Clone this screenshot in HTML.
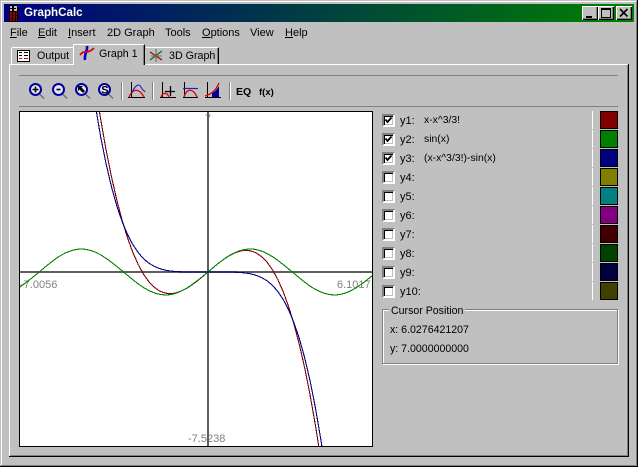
<!DOCTYPE html>
<html>
<head>
<meta charset="utf-8">
<style>
html,body{margin:0;padding:0;background:#c0c0c0;width:638px;height:467px;overflow:hidden;}
#w{position:relative;width:638px;height:467px;overflow:hidden;background:#c0c0c0;font-family:"Liberation Sans",sans-serif;font-size:11px;color:#000;}
.a{position:absolute;}
.t{position:absolute;white-space:nowrap;line-height:13px;}
.cb{position:absolute;left:382px;width:9px;height:9px;background:#fff;border:2px solid;border-color:#808080 #fff #fff #808080;box-shadow:inset 1px 1px 0 #000,inset -1px -1px 0 #c0c0c0;}
.sw{position:absolute;left:600px;width:16px;height:16px;border:1px solid #000;}
.btn{position:absolute;top:6px;width:16px;height:14px;background:#c0c0c0;box-shadow:inset 1px 1px 0 #fff,inset -1px -1px 0 #000,inset -2px -2px 0 #808080;}
.lab{color:#808080;}
</style>
</head>
<body>
<div id="w">
<!-- window frame -->
<div class="a" style="left:0;top:0;width:638px;height:1px;background:#c0c0c0"></div>
<div class="a" style="left:1px;top:1px;width:636px;height:1px;background:#fff"></div>
<div class="a" style="left:1px;top:1px;width:1px;height:465px;background:#fff"></div>
<div class="a" style="left:636px;top:1px;width:1px;height:465px;background:#808080"></div>
<div class="a" style="left:637px;top:0;width:1px;height:467px;background:#000"></div>
<div class="a" style="left:1px;top:465px;width:636px;height:1px;background:#808080"></div>
<div class="a" style="left:0;top:466px;width:638px;height:1px;background:#000"></div>

<!-- title bar -->
<div class="a" style="left:4px;top:4px;width:630px;height:18px;background:linear-gradient(to right,#000080,#008000)"></div>
<svg class="a" style="left:8px;top:5px" width="11" height="17" viewBox="0 0 11 17" shape-rendering="crispEdges">
<rect x="1" y="0" width="9" height="17" fill="#000"/>
<rect x="2" y="1" width="7" height="5" fill="#c0c0c0"/>
<rect x="4" y="1" width="2" height="5" fill="#000"/>
<rect x="2" y="3" width="6" height="1" fill="#000"/>
<rect x="2" y="7" width="2" height="9" fill="#a00000"/>
<rect x="5" y="7" width="2" height="9" fill="#a00000"/>
<rect x="8" y="7" width="1" height="9" fill="#a00000"/>
<rect x="2" y="10" width="7" height="1" fill="#400000"/>
<rect x="2" y="13" width="7" height="1" fill="#400000"/>
</svg>
<div class="t" style="left:24px;top:6px;color:#fff;font-weight:bold;font-size:11.6px">GraphCalc</div>
<div class="btn" style="left:582px"><div class="a" style="left:4px;top:10px;width:6px;height:2px;background:#000"></div></div>
<div class="btn" style="left:598px"><div class="a" style="left:3px;top:2px;width:8px;height:7px;border:1px solid #000;border-top-width:2px"></div></div>
<div class="btn" style="left:616px"><svg class="a" style="left:3px;top:2px" width="10" height="10" viewBox="0 0 10 10"><path d="M1 1L8.5 8.5M8.5 1L1 8.5" stroke="#000" stroke-width="1.6" fill="none"/></svg></div>

<!-- menu -->
<div class="t" style="left:10px;top:27px"><u>F</u>ile</div>
<div class="t" style="left:38px;top:27px"><u>E</u>dit</div>
<div class="t" style="left:68px;top:27px"><u>I</u>nsert</div>
<div class="t" style="left:107px;top:27px">2D Graph</div>
<div class="t" style="left:165px;top:27px">Tools</div>
<div class="t" style="left:202px;top:27px"><u>O</u>ptions</div>
<div class="t" style="left:250px;top:27px">View</div>
<div class="t" style="left:285px;top:27px"><u>H</u>elp</div>

<!-- tab pane -->
<div class="a" style="left:9px;top:64px;width:619px;height:1px;background:#fff"></div>
<div class="a" style="left:9px;top:64px;width:1px;height:392px;background:#fff"></div>
<div class="a" style="left:628px;top:64px;width:1px;height:393px;background:#000"></div>
<div class="a" style="left:627px;top:65px;width:1px;height:391px;background:#808080"></div>
<div class="a" style="left:9px;top:456px;width:620px;height:1px;background:#000"></div>
<div class="a" style="left:10px;top:455px;width:618px;height:1px;background:#808080"></div>

<!-- tabs -->
<div class="a" style="left:11px;top:47px;width:62px;height:17px;border-top:1px solid #fff;border-left:1px solid #fff;box-sizing:border-box;border-top-left-radius:2px"></div>
<div class="a" style="left:146px;top:47px;width:73px;height:17px;border-top:1px solid #fff;border-right:1px solid #000;box-shadow:inset -1px 0 0 #808080;box-sizing:border-box;border-top-right-radius:2px"></div>
<div class="a" style="left:73px;top:44px;width:72px;height:21px;background:#c0c0c0;border-top:1px solid #fff;border-left:1px solid #fff;border-right:1px solid #000;box-shadow:inset -1px 0 0 #808080;box-sizing:border-box"></div>
<div class="t" style="left:37px;top:50px;font-size:10.7px">Output</div>
<div class="t" style="left:99px;top:48px;font-size:10.7px">Graph 1</div>
<div class="t" style="left:169px;top:50px;font-size:10.7px">3D Graph</div>

<svg class="a" style="left:0;top:0" width="638" height="110" viewBox="0 0 638 110">
<!-- output tab icon -->
<g shape-rendering="crispEdges">
<rect x="17.5" y="50.5" width="12" height="11" fill="#fff" stroke="#000"/>
<rect x="19" y="52" width="3" height="1" fill="#000"/><rect x="24" y="52" width="4" height="1" fill="#000"/>
<rect x="19" y="55" width="3" height="1" fill="#000"/><rect x="24" y="55" width="4" height="1" fill="#000"/>
<rect x="19" y="58" width="3" height="1" fill="#c00000"/><rect x="24" y="58" width="4" height="1" fill="#c00000"/>
</g>
<!-- graph tab icon -->
<path d="M87 46C88 50 84 54 85 60" stroke="#0000d0" stroke-width="2.6" fill="none"/>
<path d="M80 55C84 49 87 55 94 48" stroke="#e00000" stroke-width="1.8" fill="none"/>
<!-- 3d tab icon -->
<path d="M156 49V62" stroke="#606060" stroke-width="1"/>
<path d="M150 52L162 60" stroke="#a00000" stroke-width="1.2"/>
<path d="M150 60L162 51" stroke="#006060" stroke-width="1.2"/>
<path d="M151 56H162" stroke="#808000" stroke-width="1"/>

<!-- toolbar lines -->
<g shape-rendering="crispEdges">
<rect x="19" y="75" width="599" height="1" fill="#808080"/>
<rect x="19" y="106" width="599" height="1" fill="#808080"/>
<rect x="121" y="82" width="1" height="18" fill="#808080"/><rect x="122" y="82" width="1" height="18" fill="#fff"/>
<rect x="152" y="82" width="1" height="18" fill="#808080"/><rect x="153" y="82" width="1" height="18" fill="#fff"/>
<rect x="229" y="82" width="1" height="18" fill="#808080"/><rect x="230" y="82" width="1" height="18" fill="#fff"/>
</g>

<!-- magnifiers -->
<g fill="#e8e8f4" stroke="#0000a0" stroke-width="2">
<circle cx="35.5" cy="89.5" r="5.5"/><circle cx="58.5" cy="89.5" r="5.5"/><circle cx="81.5" cy="89.5" r="5.5"/><circle cx="104.5" cy="89.5" r="5.5"/>
</g>
<g stroke="#707070" stroke-width="1.5" fill="none">
<path d="M40 94.5L44 98.5M63 94.5L67 98.5M86 94.5L90 98.5M109 94.5L113 98.5"/>
</g>
<path d="M32.5 89.5H38.5M35.5 86.5V92.5" stroke="#000" stroke-width="1.6"/>
<path d="M56.5 89.5H60.5" stroke="#000" stroke-width="1.6"/>
<path d="M78 86H83L81.5 87.5L85 91L83 93L79.5 89.5L78 91Z" fill="#000"/>
<text x="101.3" y="93.5" font-family="'Liberation Sans',sans-serif" font-size="11" font-weight="bold" fill="#000">S</text>

<!-- graph icon 1 -->
<path d="M131.500 82V98M128 97.500H145" stroke="#000" stroke-width="1" fill="none"/>
<path d="M129 97C133 88 139 88 144 97" stroke="#e00000" stroke-width="1.3" fill="none"/>
<path d="M132 93C135 85 139 83 141 87C142 90 144 90 145 92" stroke="#2020c0" stroke-width="1.1" fill="none"/>
<!-- graph icon 2 -->
<path d="M162.500 82V98M160 97.500H176" stroke="#000" stroke-width="1" fill="none"/>
<path d="M161 97C163 92 167 92 169 97" stroke="#e00000" stroke-width="1.3" fill="none"/>
<path d="M170.500 86V96M165 91.500H175" stroke="#000" stroke-width="1.3" fill="none"/>
<!-- graph icon 3 -->
<path d="M184.500 82V98M183 97.500H198" stroke="#000" stroke-width="1" fill="none"/>
<path d="M183 88.500H198" stroke="#2020c0" stroke-width="1.2" fill="none"/>
<path d="M184 97C187 88 193 88 197 97" stroke="#e00000" stroke-width="1.3" fill="none"/>
<!-- graph icon 4 -->
<path d="M212 97V93C215 92 217 89 219 86V97Z" fill="#0000a0"/>
<path d="M207.500 82V98M205 97.500H221" stroke="#000" stroke-width="1" fill="none"/>
<path d="M205 96C212 94 216 90 219 83" stroke="#e00000" stroke-width="1.3" fill="none"/>
</svg>
<div class="t" style="left:236px;top:86px;font-weight:bold;font-size:10.5px">EQ</div>
<div class="t" style="left:259px;top:86px;font-weight:bold;font-size:9.5px">f(x)</div>

<!-- graph -->
<div class="a" style="left:19px;top:111px;width:352px;height:334px;background:#fff;border:1px solid #000;overflow:hidden"></div>
<div class="t lab" style="left:20px;top:279px">-7.0056</div>
<div class="t lab" style="left:337px;top:279px">6.1017</div>
<div class="t lab" style="left:188px;top:433px">-7.5238</div>
<div class="t lab" style="left:205px;top:113px">7</div>
<svg class="a" style="left:0;top:0" width="638" height="467" viewBox="0 0 638 467">
<defs><clipPath id="c"><rect x="20" y="112" width="352" height="334"/></clipPath></defs>
<g clip-path="url(#c)" fill="none" shape-rendering="crispEdges">
<rect x="207" y="112" width="2" height="334" fill="#5f5f5f"/>
<rect x="20" y="271" width="352" height="2" fill="#5f5f5f"/>
<g stroke="#800000" stroke-width="1.100">
<polyline transform="translate(208 272)" points="0,0 5.37,-4.57 10.74,-8.95 16.12,-12.97 21.49,-16.44 26.86,-19.17 32.23,-20.98 37.6,-21.68 42.98,-21.1 48.35,-19.04 53.72,-15.33 59.09,-9.78 64.46,-2.21 69.84,7.57 75.21,19.75 80.58,34.5 85.95,52.01 91.32,72.47 96.7,96.05 102.07,122.94 107.44,153.33 112.81,187.4"/>
<polyline transform="translate(208 272) rotate(180)" points="0,0 5.37,-4.57 10.74,-8.95 16.12,-12.97 21.49,-16.44 26.86,-19.17 32.23,-20.98 37.6,-21.68 42.98,-21.1 48.35,-19.04 53.72,-15.33 59.09,-9.78 64.46,-2.21 69.84,7.57 75.21,19.75 80.58,34.5 85.95,52.01 91.32,72.47 96.7,96.05 102.07,122.94 107.44,153.33 112.81,187.4"/>
</g>
<path stroke="#008000" stroke-width="1.100" d="M-2.96 295c15.27 0 28.43 -11.78 42.19 -23c13.76 -11.78 26.92 -23 42.19 -23c15.27 0 28.43 11.78 42.19 23c13.76 11.78 26.92 23 42.19 23c15.27 0 28.43 -11.78 42.19 -23c13.76 -11.78 26.92 -23 42.19 -23c15.27 0 28.43 11.78 42.19 23c13.76 11.78 26.92 23 42.19 23c15.27 0 28.43 -11.78 42.19 -23c13.76 -11.78 26.92 -23 42.19 -23"/>
<g stroke="#000080" stroke-width="1.100">
<polyline transform="translate(208 272)" points="0,0 5.37,0 10.74,0 16.12,.01 21.49,.06 26.86,.19 32.23,.46 37.6,.98 42.98,1.89 48.35,3.35 53.72,5.58 59.09,8.81 64.46,13.33 69.84,19.43 75.21,27.46 80.58,37.75 85.95,50.67 91.32,66.59 96.7,85.87 102.07,108.87 107.44,135.93 112.81,167.36 115.5,185"/>
<polyline transform="translate(208 272) rotate(180)" points="0,0 5.37,0 10.74,0 16.12,.01 21.49,.06 26.86,.19 32.23,.46 37.6,.98 42.98,1.89 48.35,3.35 53.72,5.58 59.09,8.81 64.46,13.33 69.84,19.43 75.21,27.46 80.58,37.75 85.95,50.67 91.32,66.59 96.7,85.87 102.07,108.87 107.44,135.93 112.81,167.36 115.5,185"/>
</g>
</g>
</svg>

<!-- checkboxes -->
<div class="cb" style="top:114px"><svg class="a" style="left:0;top:0" width="9" height="9" viewBox="0 0 9 9"><path d="M1.500 3.500L3.500 6L7.500 1.500" stroke="#000" stroke-width="1.800" fill="none"/></svg></div>
<div class="cb" style="top:133px"><svg class="a" style="left:0;top:0" width="9" height="9" viewBox="0 0 9 9"><path d="M1.500 3.500L3.500 6L7.500 1.500" stroke="#000" stroke-width="1.800" fill="none"/></svg></div>
<div class="cb" style="top:152px"><svg class="a" style="left:0;top:0" width="9" height="9" viewBox="0 0 9 9"><path d="M1.500 3.500L3.500 6L7.500 1.500" stroke="#000" stroke-width="1.800" fill="none"/></svg></div>
<div class="cb" style="top:171px"></div>
<div class="cb" style="top:190px"></div>
<div class="cb" style="top:209px"></div>
<div class="cb" style="top:228px"></div>
<div class="cb" style="top:247px"></div>
<div class="cb" style="top:266px"></div>
<div class="cb" style="top:285px"></div>

<div class="t" style="left:400px;top:115px">y1:</div>
<div class="t" style="left:400px;top:134px">y2:</div>
<div class="t" style="left:400px;top:153px">y3:</div>
<div class="t" style="left:400px;top:172px">y4:</div>
<div class="t" style="left:400px;top:191px">y5:</div>
<div class="t" style="left:400px;top:210px">y6:</div>
<div class="t" style="left:400px;top:229px">y7:</div>
<div class="t" style="left:400px;top:248px">y8:</div>
<div class="t" style="left:400px;top:267px">y9:</div>
<div class="t" style="left:400px;top:286px">y10:</div>

<div class="t" style="left:424px;top:114px;font-size:10.400px">x-x^3/3!</div>
<div class="t" style="left:424px;top:133px;font-size:10.400px">sin(x)</div>
<div class="t" style="left:424px;top:152px;font-size:10.400px">(x-x^3/3!)-sin(x)</div>

<!-- separator -->
<div class="a" style="left:592px;top:111px;width:1px;height:190px;background:repeating-linear-gradient(to bottom,#fff 0,#fff 18px,#c0c0c0 18px,#c0c0c0 19px)"></div>

<!-- swatches -->
<div class="sw" style="top:111px;background:#800000"></div>
<div class="sw" style="top:130px;background:#008000"></div>
<div class="sw" style="top:149px;background:#000080"></div>
<div class="sw" style="top:168px;background:#808000"></div>
<div class="sw" style="top:187px;background:#008080"></div>
<div class="sw" style="top:206px;background:#800080"></div>
<div class="sw" style="top:225px;background:#400000"></div>
<div class="sw" style="top:244px;background:#004000"></div>
<div class="sw" style="top:263px;background:#000040"></div>
<div class="sw" style="top:282px;background:#404000"></div>

<!-- cursor group -->
<div class="a" style="left:382px;top:309px;width:234px;height:53px;border:1px solid #808080;box-shadow:1px 1px 0 #fff,inset 1px 1px 0 #fff"></div>
<div class="t" style="left:389px;top:305px;background:#c0c0c0;padding:0 2px;font-size:10.600px">Cursor Position</div>
<div class="t" style="left:390px;top:324px;font-size:10.600px">x: 6.0276421207</div>
<div class="t" style="left:390px;top:343px;font-size:10.600px">y: 7.0000000000</div>
</div>
</body>
</html>
